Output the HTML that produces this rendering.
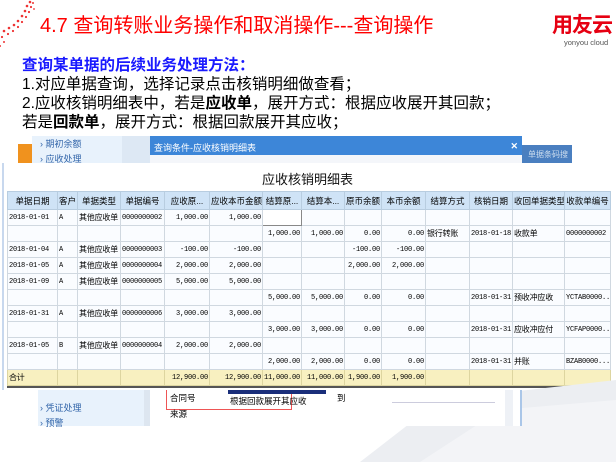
<!DOCTYPE html>
<html><head><meta charset="utf-8"><style>
*{margin:0;padding:0;box-sizing:border-box}
body{width:616px;height:462px;overflow:hidden;background:#fff;position:relative;font-family:"Liberation Sans","Noto Sans CJK SC",sans-serif}
.a{position:absolute}
.t{font-size:20px;color:#f00;left:40px;top:9px;white-space:nowrap}
.h{left:22px;top:53px;font-size:15.5px;color:#1a1aff;font-weight:bold}
.l{left:22px;font-size:15.5px;color:#000;white-space:nowrap}
table{border-collapse:collapse;position:absolute;left:7px;top:191px;width:603px;font-family:"Liberation Mono","Noto Sans CJK SC",monospace;font-size:7px;letter-spacing:-0.2px;table-layout:fixed}
td{border:1px solid #d0d8e0;height:16px;padding:0 1px;white-space:nowrap;overflow:hidden;background:#fafcff}
tr.hd td{background:#cfe3f6;border-color:#b8cde0;height:18px;text-align:center;font-family:"Liberation Sans","Noto Sans CJK SC",sans-serif;font-size:8.5px;letter-spacing:0}
td.r{text-align:right}
td.c{font-family:"Noto Sans CJK SC",sans-serif;font-size:8px}
tr.tot td{background:#f8f0c0;border-color:#ddd5a0}
</style></head><body>
<svg class="a" style="left:0;top:0" width="40" height="50">
<g fill="#e33">
<circle cx="30" cy="2" r="1.3"/><circle cx="27" cy="6" r="1.3"/><circle cx="31" cy="7" r="1.1"/><circle cx="25" cy="11" r="1.3"/><circle cx="29" cy="12" r="1.1"/><circle cx="22" cy="16" r="1.3"/><circle cx="26" cy="17" r="1.1"/><circle cx="18" cy="21" r="1.3"/><circle cx="22" cy="22" r="1.1"/><circle cx="14" cy="25" r="1.3"/><circle cx="18" cy="27" r="1.1"/><circle cx="9" cy="28" r="1.3"/><circle cx="13" cy="31" r="1.1"/><circle cx="4" cy="31" r="1.3"/><circle cx="8" cy="34" r="1.1"/><circle cx="2" cy="37" r="1.1"/><circle cx="4" cy="42" r="1"/><circle cx="0" cy="46" r="1"/><circle cx="33" cy="3" r="1"/><circle cx="34" cy="9" r="0.9"/>
</g></svg>
<div class="a t">4.7 查询转账业务操作和取消操作---查询操作</div>
<div class="a" style="left:552px;top:9px;font-size:21px;font-weight:bold;color:#e60012;letter-spacing:-1px">用友云</div>
<div class="a" style="left:564px;top:38px;font-size:7.5px;color:#555">yonyou cloud</div>
<div class="a h">查询某单据的后续业务处理方法：</div>
<div class="a l" style="top:72px">1.对应单据查询，选择记录点击核销明细做查看；</div>
<div class="a l" style="top:91px">2.应收核销明细表中，若是<b>应收单</b>，展开方式：根据应收展开其回款；</div>
<div class="a l" style="top:110px">若是<b>回款单</b>，展开方式：根据回款展开其应收；</div>
<div class="a" style="left:18px;top:144px;width:14px;height:20px;background:#f0921e"></div>
<div class="a" style="left:32px;top:136px;width:90px;height:28px;background:#e8f2fc"></div>
<div class="a" style="left:40px;top:137px;font-size:9px;color:#3366aa">› 期初余额</div>
<div class="a" style="left:40px;top:152px;font-size:9px;color:#3366aa">› 应收处理</div>
<div class="a" style="left:122px;top:136px;width:28px;height:28px;background:#dde8f4"></div>
<div class="a" style="left:150px;top:136px;width:372px;height:19px;background:#3d86d8;color:#fff;font-size:9px;padding:5px 4px">查询条件-应收核销明细表<span style="float:right;font-weight:bold">✕</span></div>
<div class="a" style="left:150px;top:155px;width:372px;height:9px;background:#f4f6fa"></div>
<div class="a" style="left:522px;top:145px;width:50px;height:18px;background:#4a7fc0;color:#cde;font-size:8px;padding:4px 6px;overflow:hidden;white-space:nowrap">单据条码搜</div>
<div class="a" style="left:0;top:163px;width:616px;height:227px;background:#fff"></div>
<div class="a" style="left:2px;top:163px;width:2px;height:227px;background:#c8d8ee"></div>
<div class="a" style="left:262px;top:169px;font-size:13px;color:#111">应收核销明细表</div>
<table>
<colgroup><col style="width:50px"><col style="width:20px"><col style="width:43px"><col style="width:44px"><col style="width:45px"><col style="width:53px"><col style="width:39px"><col style="width:43px"><col style="width:37px"><col style="width:44px"><col style="width:44px"><col style="width:43px"><col style="width:52px"><col style="width:46px"></colgroup>
<tr class="hd"><td>单据日期</td><td>客户</td><td>单据类型</td><td>单据编号</td><td>应收原...</td><td>应收本币金额</td><td>结算原...</td><td>结算本...</td><td>原币余额</td><td>本币余额</td><td>结算方式</td><td>核销日期</td><td>收回单据类型</td><td>收款单编号</td></tr>
<tr><td>2018-01-01</td><td>A</td><td class="c">其他应收单</td><td>0000000002</td><td class="r">1,000.00</td><td class="r">1,000.00</td><td style="border:1px solid #888;background:#fff"></td><td></td><td></td><td></td><td></td><td></td><td></td><td></td></tr>
<tr><td></td><td></td><td></td><td></td><td></td><td></td><td class="r">1,000.00</td><td class="r">1,000.00</td><td class="r">0.00</td><td class="r">0.00</td><td class="c">银行转账</td><td>2018-01-18</td><td class="c">收款单</td><td>0000000002</td></tr>
<tr><td>2018-01-04</td><td>A</td><td class="c">其他应收单</td><td>0000000003</td><td class="r">-100.00</td><td class="r">-100.00</td><td></td><td></td><td class="r">-100.00</td><td class="r">-100.00</td><td></td><td></td><td></td><td></td></tr>
<tr><td>2018-01-05</td><td>A</td><td class="c">其他应收单</td><td>0000000004</td><td class="r">2,000.00</td><td class="r">2,000.00</td><td></td><td></td><td class="r">2,000.00</td><td class="r">2,000.00</td><td></td><td></td><td></td><td></td></tr>
<tr><td>2018-01-09</td><td>A</td><td class="c">其他应收单</td><td>0000000005</td><td class="r">5,000.00</td><td class="r">5,000.00</td><td></td><td></td><td></td><td></td><td></td><td></td><td></td><td></td></tr>
<tr><td></td><td></td><td></td><td></td><td></td><td></td><td class="r">5,000.00</td><td class="r">5,000.00</td><td class="r">0.00</td><td class="r">0.00</td><td></td><td>2018-01-31</td><td class="c">预收冲应收</td><td>YCTAB0000...</td></tr>
<tr><td>2018-01-31</td><td>A</td><td class="c">其他应收单</td><td>0000000006</td><td class="r">3,000.00</td><td class="r">3,000.00</td><td></td><td></td><td></td><td></td><td></td><td></td><td></td><td></td></tr>
<tr><td></td><td></td><td></td><td></td><td></td><td></td><td class="r">3,000.00</td><td class="r">3,000.00</td><td class="r">0.00</td><td class="r">0.00</td><td></td><td>2018-01-31</td><td class="c">应收冲应付</td><td>YCFAP0000...</td></tr>
<tr><td>2018-01-05</td><td>B</td><td class="c">其他应收单</td><td>0000000004</td><td class="r">2,000.00</td><td class="r">2,000.00</td><td></td><td></td><td></td><td></td><td></td><td></td><td></td><td></td></tr>
<tr><td></td><td></td><td></td><td></td><td></td><td></td><td class="r">2,000.00</td><td class="r">2,000.00</td><td class="r">0.00</td><td class="r">0.00</td><td></td><td>2018-01-31</td><td class="c">并账</td><td>BZAB0000...</td></tr>
<tr class="tot"><td class="c">合计</td><td></td><td></td><td></td><td class="r">12,900.00</td><td class="r">12,900.00</td><td class="r">11,000.00</td><td class="r">11,000.00</td><td class="r">1,900.00</td><td class="r">1,900.00</td><td></td><td></td><td></td><td></td></tr>
</table>
<div class="a" style="left:7px;top:386px;width:603px;height:2px;background:#555"></div>
<svg class="a" style="left:300px;top:380px" width="316" height="82"><polygon points="60,82 140,20 316,0 316,82" fill="#eceef2"/><polygon points="120,82 200,30 316,20 316,82" fill="#f3f4f7"/></svg>
<div class="a" style="left:38px;top:390px;width:106px;height:36px;background:#e8f2fc"></div>
<div class="a" style="left:40px;top:401px;font-size:9px;color:#3366aa">› 凭证处理</div>
<div class="a" style="left:40px;top:416px;font-size:9px;color:#3366aa">› 预警</div>
<div class="a" style="left:144px;top:390px;width:6px;height:36px;background:#dde6f0"></div>
<div class="a" style="left:150px;top:390px;width:372px;height:36px;background:#fff"></div>
<div class="a" style="left:166px;top:390px;width:126px;height:20px;border:1px solid #e55;border-top:none"></div>
<div class="a" style="left:170px;top:392px;font-size:8.5px">合同号</div>
<div class="a" style="left:170px;top:408px;font-size:8.5px">来源</div>
<div class="a" style="left:228px;top:390px;width:98px;height:4px;background:#1a2e7a"></div>
<div class="a" style="left:230px;top:395px;font-size:8.5px">根据回款展开其应收</div>
<div class="a" style="left:337px;top:392px;font-size:8.5px">到</div>
<div class="a" style="left:392px;top:402px;width:103px;height:1px;background:#ccd"></div>
<div class="a" style="left:505px;top:390px;width:8px;height:36px;background:#eef1f6"></div>
<div class="a" style="left:520px;top:390px;width:2px;height:36px;background:#aac6e8"></div>
</body></html>
